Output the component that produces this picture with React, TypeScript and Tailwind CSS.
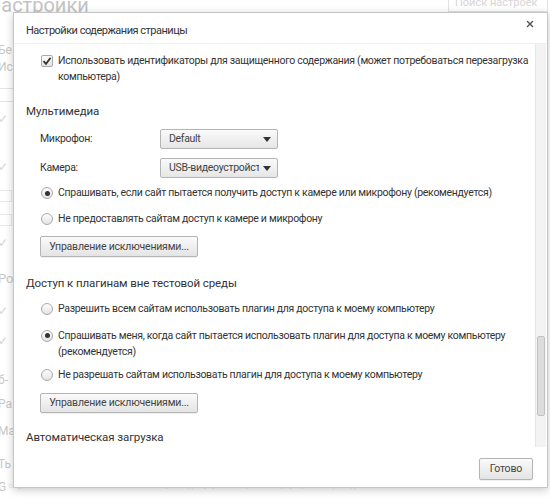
import { X } from "lucide-react";

const font = { fontFamily: 'Roboto, "Liberation Sans", Arial, sans-serif' };

const Radio = ({ checked }: { checked?: boolean }) => (
  <span className="mt-[2px] flex h-[12px] w-[12px] shrink-0 items-center justify-center rounded-full border border-[#a9a9a9] bg-gradient-to-b from-[#fdfdfd] to-[#e4e4e4]">
    {checked && <span className="h-[5px] w-[5px] rounded-full bg-[#333]" />}
  </span>
);

const Checkbox = () => (
  <span className="mt-[2px] flex h-[12px] w-[12px] shrink-0 items-center justify-center rounded-[2px] border border-[#a9a9a9] bg-gradient-to-b from-[#fdfdfd] to-[#e4e4e4]">
    <svg width="10" height="10" viewBox="0 0 10 10">
      <path d="M1.5 5.2 L4 7.8 L8.6 1.8" fill="none" stroke="#333" strokeWidth="1.8" />
    </svg>
  </span>
);

const Select = ({ value }: { value: string }) => (
  <div className="flex h-[20px] w-[118px] items-center justify-between rounded-[2px] border border-[#b4b4b4] bg-gradient-to-b from-[#fafafa] to-[#e6e6e6] pl-[8px] pr-[6px] text-[10.5px] tracking-[-0.3px] text-[#444]">
    <span className="overflow-hidden whitespace-nowrap">{value}</span>
    <svg width="8" height="5" viewBox="0 0 8 5" className="ml-1 shrink-0">
      <path d="M0 0 H8 L4 5 Z" fill="#333" />
    </svg>
  </div>
);

const Button = ({ children, className = "" }: { children: React.ReactNode; className?: string }) => (
  <button
    className={`flex items-center justify-center whitespace-nowrap rounded-[2px] border border-[#b4b4b4] bg-gradient-to-b from-[#fafafa] to-[#e4e4e4] px-[9px] text-[10.5px] tracking-[-0.2px] text-[#444] shadow-[0_1px_0_rgba(0,0,0,0.06)] ${className}`}
  >
    {children}
  </button>
);

const Option = ({
  checked,
  className = "",
  children,
}: {
  checked?: boolean;
  className?: string;
  children: React.ReactNode;
}) => (
  <label className={`ml-[15px] flex gap-[5px] whitespace-nowrap text-[10.5px] leading-[16px] tracking-[-0.3px] text-[#333] ${className}`}>
    <Radio checked={checked} />
    <span>{children}</span>
  </label>
);

export default function App() {
  return (
    <div className="relative h-[499px] w-[550px] overflow-hidden bg-white" style={font}>
      {/* faded settings page behind the dialog */}
      <div className="flex h-full flex-col text-[#c8c8c8]">
        <div className="flex items-start justify-between">
          <span className="-ml-[13px] -mt-[7px] text-[20px] leading-[24px] text-[#c4c4c4]">Настройки</span>
          <div className="-mt-[6px] mr-[2px] h-[18px] w-[100px] border border-[#e2e2e2] pl-[6px] text-[11px] leading-[16px] text-[#d6d6d6]">
            Поиск настроек
          </div>
        </div>
        <div className="ml-[-2px] flex flex-col text-[12px] leading-[14px]">
          <span className="mt-[26px]">Бе</span>
          <span className="mt-[3px]">Ис</span>
          <span className="mt-[14px] h-[14px] w-[16px] border border-[#e4e4e4]" />
          <span className="mt-[10px] text-[#d4d4d4]">✓</span>
          <span className="mt-[34px] text-[#d4d4d4]">✓</span>
          <span className="mt-[16px] h-[12px] w-[14px] border border-[#eaeaea]" />
          <span className="mt-[12px] h-[12px] w-[14px] border border-[#eaeaea]" />
          <span className="mt-[10px] text-[#d4d4d4]">✓</span>
          <span className="mt-[22px] text-[13px]">Ро</span>
          <span className="mt-[18px] text-[#d4d4d4]">✓</span>
          <span className="mt-[16px] text-[#d4d4d4]">✓</span>
          <span className="mt-[25px]">б-</span>
          <span className="mt-[10px]">Ра</span>
          <span className="mt-[13px]">Ма</span>
          <span className="mt-[19px]">Ть</span>
          <div className="mt-[9px] flex items-start gap-[2px] whitespace-nowrap">
            <span>G</span>
            <span className="mt-[1px] text-[8px] leading-[10px] text-[#e8e8e8]">
              oogle Chrome может использовать веб-службы для улучшения работы браузера и защиты данных
            </span>
          </div>
        </div>
      </div>

      {/* dialog */}
      <div className="absolute left-[13px] top-[12px] flex h-[476px] w-[535px] flex-col border border-[#c6c6c6] bg-white shadow-[0_2px_8px_rgba(0,0,0,0.22)]">
        <header className="flex h-[31px] shrink-0 items-start justify-between border-b border-[#f0f0f0]">
          <h1 className="ml-[12px] mt-[9px] text-[11px] leading-[18px] tracking-[-0.5px] text-[#333]">
            Настройки содержания страницы
          </h1>
          <X className="mr-[12px] mt-[6px] h-[10px] w-[10px] text-[#555]" strokeWidth={3.5} />
        </header>

        <div className="flex min-h-0 flex-1">
          <div className="flex min-w-0 flex-1 flex-col overflow-hidden pl-[12px]">
            <label className="ml-[15px] mt-[9px] flex gap-[5px] whitespace-nowrap text-[10.5px] leading-[16px] tracking-[-0.3px] text-[#333]">
              <Checkbox />
              <span>
                Использовать идентификаторы для защищенного содержания (может потребоваться перезагрузка
                <br />
                компьютера)
              </span>
            </label>

            <h2 className="mt-[16px] text-[11.5px] leading-[20px] tracking-[-0.1px] text-[#333]">Мультимедиа</h2>

            <div className="ml-[14px] mt-[8px] flex items-center text-[10.5px] tracking-[-0.3px] text-[#333]">
              <span className="w-[120px]">Микрофон:</span>
              <Select value="Default" />
            </div>
            <div className="ml-[14px] mt-[9px] flex items-center text-[10.5px] tracking-[-0.3px] text-[#333]">
              <span className="w-[120px]">Камера:</span>
              <Select value="USB-видеоустройст" />
            </div>

            <Option checked className="mt-[7px]">
              Спрашивать, если сайт пытается получить доступ к камере или микрофону (рекомендуется)
            </Option>
            <Option className="mt-[10px]">Не предоставлять сайтам доступ к камере и микрофону</Option>

            <Button className="ml-[14px] mt-[9px] h-[23px] w-[158px]">Управление исключениями...</Button>

            <h2 className="mt-[16px] text-[11.5px] leading-[20px] tracking-[-0.1px] text-[#333]">
              Доступ к плагинам вне тестовой среды
            </h2>

            <Option className="mt-[8px]">
              Разрешить всем сайтам использовать плагин для доступа к моему компьютеру
            </Option>
            <Option checked className="mt-[11px]">
              Спрашивать меня, когда сайт пытается использовать плагин для доступа к моему компьютеру
              <br />
              (рекомендуется)
            </Option>
            <Option className="mt-[7px]">
              Не разрешать сайтам использовать плагин для доступа к моему компьютеру
            </Option>

            <Button className="ml-[14px] mt-[10px] h-[22px] w-[158px]">Управление исключениями...</Button>

            <h2 className="mt-[14px] text-[11.5px] leading-[20px] tracking-[-0.1px] text-[#333]">Автоматическая загрузка</h2>
          </div>

          {/* scrollbar */}
          <div className="mr-[1px] flex w-[11px] shrink-0 flex-col border-l border-[#e6e6e6] bg-[#f3f3f3]">
            <div className="ml-[1px] mt-[292px] h-[80px] w-[8px] rounded-[2px] border border-[#c2c2c2] bg-[#dcdcdc]" />
          </div>
        </div>

        <footer className="flex h-[40px] shrink-0 items-center justify-end pr-[14px] pt-[4px]">
          <Button className="h-[22px] px-[10px]">Готово</Button>
        </footer>
      </div>
    </div>
  );
}
